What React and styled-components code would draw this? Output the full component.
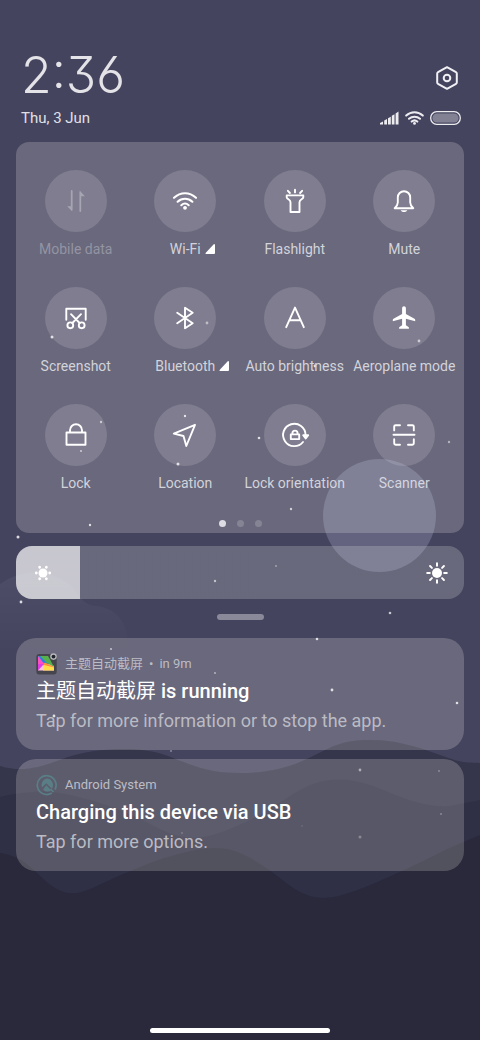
import { useState } from "react";
import styled, { createGlobalStyle } from "styled-components";

const GlobalStyle = createGlobalStyle`
  * {
    box-sizing: border-box;
  }

  body {
    margin: 0;
    background: #29293b;
    font-family: Roboto, "Noto Sans CJK SC", sans-serif;
  }

  button {
    padding: 0;
    border: 0;
    background: none;
    color: inherit;
    font-family: inherit;
    cursor: pointer;
  }

  h2,
  p {
    margin: 0;
  }
`;

const glass = "rgba(248, 250, 240, 0.2)";

const Page = styled.div`
  position: relative;
  isolation: isolate;
  display: flex;
  flex-direction: column;
  min-height: 100vh;
  padding: 44px 16px 7px;
  overflow: hidden;
  color: #fff;
`;

const Wallpaper = styled.svg`
  position: absolute;
  inset: 0;
  z-index: -1;
  width: 100%;
  height: 100%;
`;

const Header = styled.header`
  padding: 0 3px 0 5px;
  margin-bottom: 12px;
`;

const HeaderRow = styled.div`
  display: flex;
  align-items: flex-end;
  justify-content: space-between;
`;

const Clock = styled.time`
  font-family: Inter, Lato, sans-serif;
  font-size: 50px;
  font-weight: 300;
  line-height: 62px;
  font-feature-settings: "cv03", "cv09", "case";
  color: #e3e3e8;
`;

const SettingsButton = styled.button`
  display: flex;
  align-items: center;
  justify-content: center;
  width: 28px;
  height: 56px;
`;

const DateText = styled.span`
  font-size: 15px;
  line-height: 24px;
  color: #e0e0e6;
`;

const StatusIcons = styled.div`
  display: flex;
  align-items: center;
  gap: 6px;
  height: 24px;
`;

const Panel = styled.section`
  padding: 28px 5px 6px;
  border-radius: 13px;
  background: ${glass};
`;

const TileGrid = styled.div`
  display: grid;
  grid-template-columns: repeat(4, minmax(0, 1fr));
  row-gap: 28px;
`;

const Tile = styled.button`
  display: flex;
  flex-direction: column;
  align-items: center;
  gap: 7px;
  color: ${(props) => (props.disabled ? "#a6a5b2" : "#fff")};
`;

const TileIcon = styled.span`
  display: flex;
  align-items: center;
  justify-content: center;
  width: 62px;
  height: 62px;
  border-radius: 50%;
  background: rgba(255, 248, 255, 0.15);
`;

const TileLabel = styled.span`
  display: flex;
  align-items: center;
  gap: 4px;
  font-size: 14px;
  line-height: 20px;
  white-space: nowrap;
  color: ${(props) => (props.$dim ? "#9494a3" : "#d3d3da")};

  &::before {
    content: "";
    display: ${(props) => (props.$more ? "block" : "none")};
    width: 10px;
  }
`;

const Dots = styled.div`
  display: flex;
  justify-content: center;
  gap: 11px;
  margin-top: 27px;
`;

const Dot = styled.span`
  width: 7px;
  height: 7px;
  border-radius: 50%;
  background: ${(props) => (props.$active ? "#dcdce2" : "#858495")};
`;

const Brightness = styled.label`
  position: relative;
  display: block;
  margin-top: 13px;
`;

const Range = styled.input`
  display: block;
  appearance: none;
  width: 100%;
  height: 53px;
  margin: 0;
  border-radius: 16px;
  cursor: pointer;

  &::-webkit-slider-thumb {
    appearance: none;
    width: 1px;
    height: 53px;
  }
`;

const SunIcon = styled.svg`
  position: absolute;
  top: 15px;
  ${(props) => (props.$side === "left" ? "left: 15px;" : "right: 15px;")}
  pointer-events: none;
`;

const Handle = styled.div`
  align-self: center;
  width: 47px;
  height: 6px;
  margin: 15px 0 18px;
  border-radius: 3px;
  background: #8a899a;
`;

const Notifications = styled.div`
  display: flex;
  flex-direction: column;
  gap: 9px;
`;

const Card = styled.article`
  display: flex;
  flex-direction: column;
  gap: 2px;
  padding: 15px 20px;
  border-radius: 20px;
  background: ${glass};
`;

const CardHeader = styled.div`
  display: flex;
  align-items: center;
  gap: 8px;
  height: 22px;
  font-size: 13px;
  line-height: 20px;
  color: #bcbcc5;
`;

const CardMeta = styled.div`
  display: flex;
  align-items: center;
  gap: 6px;
`;

const CardTitle = styled.h2`
  font-size: 20px;
  font-weight: 500;
  line-height: 28px;
`;

const TitleApp = styled.span`
  font-weight: 400;
`;

const CardText = styled.p`
  font-size: 18px;
  line-height: 28px;
  color: #bbbbc4;
`;

const TouchPoint = styled.div`
  position: absolute;
  top: 459px;
  left: 323px;
  width: 113px;
  height: 113px;
  border-radius: 50%;
  background: rgba(220, 224, 255, 0.2);
  pointer-events: none;
`;

const HomeBar = styled.div`
  align-self: center;
  width: 40%;
  height: 5px;
  margin-top: auto;
  border-radius: 3px;
  background: #fff;
`;

const stars = [
  [52, 337, 1.5, 0.8],
  [207, 323, 1.4, 0.5],
  [419, 341, 1.4, 0.6],
  [315, 366, 1.4, 0.8],
  [101, 422, 1.2, 0.6],
  [81, 451, 1.1, 0.6],
  [185, 416, 1.2, 0.8],
  [178, 464, 1.5, 0.8],
  [259, 438, 1.3, 0.8],
  [449, 442, 1.2, 0.5],
  [291, 509, 1.2, 0.7],
  [90, 525, 1.2, 0.8],
  [18, 537, 1.5, 0.8],
  [21, 602, 1.4, 0.8],
  [215, 581, 1.2, 0.6],
  [276, 566, 1, 0.4],
  [390, 613, 1.3, 0.7],
  [317, 639, 1.3, 0.8],
  [111, 649, 1.1, 0.6],
  [332, 690, 1.4, 0.8],
  [215, 673, 1, 0.5],
  [54, 716, 1.4, 0.8],
  [457, 703, 1.3, 0.8],
  [171, 751, 0.9, 0.4],
  [360, 770, 1.4, 0.5],
  [439, 771, 1, 0.3],
  [441, 814, 1, 0.3],
  [360, 837, 1.5, 0.3],
  [302, 826, 1, 0.1],
  [182, 833, 1, 0.2],
];

const icons = {
  data: (
    <g strokeWidth="1.8">
      <path d="M7.7 2v18.5M16.3 22V3.5" />
      <path
        d="M8.4 22.5L3.2 17.2h4zM15.5 1.5l5.400 5.700h-4z"
        fill="currentColor"
        stroke="none"
      />
    </g>
  ),
  wifi: (
    <g strokeWidth="2.1">
      <path d="M1 8.8C7.5 2.8 16.5 2.8 23 8.8M4.6 12.7c4.3-4 10.5-4 14.8 0M8.3 16.2c2.2-2 5.2-2 7.4 0" />
      <circle cx="12" cy="18.8" r="1.9" fill="currentColor" stroke="none" />
    </g>
  ),
  flashlight: (
    <path d="M12 .8v2.6M4.9 1.8l2 2.2M19.1 1.8l-2 2.2M3.7 6.4h16.6v1.8c0 2-3.8 2.4-3.8 5V23h-9v-9.8c0-2.6-3.8-3-3.8-5z" />
  ),
  bell: (
    <>
      <path d="M2.7 19.2c1.9-1.8 3.1-3 3.1-5.6V8.4a6.2 6.2 0 0 1 12.4 0v5.2c0 2.6 1.2 3.8 3.1 5.6z" />
      <path d="M8.7 21.3h6.6c-.8 2.4-5.8 2.4-6.600 0z" fill="currentColor" stroke="none" />
    </>
  ),
  screenshot: (
    <>
      <path d="M2.3 13.7V2.8h19.4v10.9M17 8.2L8.4 17M7 8.2l8.6 8.8" />
      <circle cx="6.3" cy="19.3" r="2.9" />
      <circle cx="17.7" cy="19.3" r="2.9" />
    </>
  ),
  bluetooth: <path d="M4.2 17.2L19.7 6.8 12 1.7v20.6l7.7-5.1L4.2 6.8" />,
  auto: <path d="M3.2 21.2L12 1.6l8.8 19.6M6.4 14.3h11.2" />,
  plane: (
    <path
      d="M12 .3c1.1 0 1.9.8 1.9 2v5.8l8.6 4.7c.5.3.7.7.7 1.2v1.2l-9.3-2.5v6.5l2.6 1.900c.3.2.4.5.4.8v.9H7.1v-.9c0-.3.1-.6.4-.8l2.600-1.900v-6.500L.8 15.200V14c0-.5.2-.9.7-1.200l8.600-4.700V2.300c0-1.200.8-2 1.900-2z"
      fill="currentColor"
      stroke="none"
    />
  ),
  lock: <path d="M2.5 9.5h19v12.3h-19zM6 9.3V7.2a6 6 0 0 1 12 0v2.1" />,
  location: <path d="M22 1.8L.8 10.6l9.7 2.4 2.8 10z" />,
  orientation: (
    <>
      <path d="M22.5 12A11.2 11.2 0 1 0 20 19" />
      <path d="M20.200 12.200h5L22.700 15.500z" fill="currentColor" />
      <path d="M7.8 11.4h8.4v4.7H7.8zM9.4 11.2v-1a2.6 2.6 0 0 1 5.2 0v1" />
    </>
  ),
  scanner: (
    <path d="M2.2 7.4V3.6c0-.9.5-1.4 1.4-1.4H8M16 2.2h4.4c.9 0 1.4.5 1.4 1.4v3.8M21.8 16.3v4c0 .9-.5 1.4-1.4 1.4H16M8 21.7H3.6c-.9 0-1.4-.5-1.4-1.4v-4M1.5 11.8h21" />
  ),
};

const tiles = [
  { icon: "data", label: "Mobile data", disabled: true },
  { icon: "wifi", label: "Wi-Fi", more: true },
  { icon: "flashlight", label: "Flashlight" },
  { icon: "bell", label: "Mute" },
  { icon: "screenshot", label: "Screenshot" },
  { icon: "bluetooth", label: "Bluetooth", more: true },
  { icon: "auto", label: "Auto brightness" },
  { icon: "plane", label: "Aeroplane mode" },
  { icon: "lock", label: "Lock" },
  { icon: "location", label: "Location" },
  { icon: "orientation", label: "Lock orientation" },
  { icon: "scanner", label: "Scanner" },
];

function Icon({ name }) {
  return (
    <svg
      width="24"
      height="24"
      viewBox="0 0 24 24"
      fill="none"
      stroke="currentColor"
      strokeWidth="1.9"
      strokeLinecap="round"
      strokeLinejoin="round"
      overflow="visible"
      aria-hidden="true"
    >
      {icons[name]}
    </svg>
  );
}

function Background() {
  return (
    <Wallpaper viewBox="0 0 480 1040" preserveAspectRatio="xMidYMax slice" aria-hidden="true">
      <defs>
        <linearGradient id="hill" x1="0" y1="0" x2="0" y2="1">
          <stop offset="0" stopColor="#fff" stopOpacity="0.05" />
          <stop offset="0.6" stopColor="#fff" stopOpacity="0" />
        </linearGradient>
      </defs>
      <rect width="480" height="1040" fill="#45445f" />
      <path
        d="M0 584C20 570 45 568 66 582C78 590 80 605 96 606C116 608 128 622 128 646V706H0z"
        fill="url(#hill)"
      />
      <path
        d="M0 766C30 775 50 762 75 755S140 746 165 755S205 773 240 773S295 765 315 755S345 740 370 740S415 746 440 755S465 762 480 763V1040H0z"
        fill="#35354b"
      />
      <path
        d="M0 797C20 792 45 789 70 795S120 808 150 824S195 842 225 831S280 802 300 790S345 776 370 785S420 808 450 806L480 800V1040H0z"
        fill="#2f2f45"
      />
      <path
        d="M0 853C28 857 38 877 52 886S75 896 95 887S145 863 175 855S225 843 252 859S285 884 300 892S330 900 355 891S420 863 445 850L480 835V1040H0z"
        fill="#29293b"
      />
      {stars.map(([x, y, r, opacity]) => (
        <circle key={`${x}-${y}`} cx={x} cy={y} r={r} fill="#fff" opacity={opacity} />
      ))}
    </Wallpaper>
  );
}

function StatusBar() {
  return (
    <StatusIcons>
      <svg width="19" height="14" viewBox="0 0 19 14" fill="#ececf0" aria-label="Signal">
        <path d="M0 13.5V12l3-1.5v3zM4.2 9.5L7 8v5.5H4.2zM8 7.300l2.800-1.500v7.700H8zM11.800 4.800l2.700-1.500v10.200h-2.700zM15.600 2.400L18.500.6v12.900h-2.900z" />
      </svg>
      <svg width="19" height="14" viewBox="0 0 19 14" fill="none" aria-label="Wi-Fi">
        <g stroke="#ececf0" strokeWidth="2" strokeLinecap="round">
          <path d="M1.2 4.6c4.8-4.4 11.8-4.4 16.6 0M4 7.8c3.2-2.9 7.8-2.9 11 0M6.7 10.6c1.7-1.5 3.9-1.5 5.6 0" />
        </g>
        <circle cx="9.5" cy="12.400" r="1.4" fill="#ececf0" />
      </svg>
      <svg width="31" height="14" viewBox="0 0 31 14" fill="none" aria-label="Battery">
        <rect x=".7" y=".7" width="29.6" height="12.6" rx="6" stroke="#ececf0" strokeWidth="1.3" />
        <rect x="2.5" y="2.5" width="26" height="9" rx="4.3" fill="#828193" />
      </svg>
    </StatusIcons>
  );
}

function GalleryIcon() {
  return (
    <svg width="21" height="22" viewBox="0 0 21 22" aria-hidden="true">
      <rect x=".3" y="1" width="20.4" height="20.5" rx="3" fill="#46454d" />
      <path d="M2 3l16 10v4.5H2z" fill="#ffc2dc" />
      <path d="M2 3v9l7-1z" fill="#ff4fc4" />
      <path d="M2 3h3l9 8-5 1z" fill="#2b7de0" />
      <path d="M4 3h8l2 3.500 4 7.500-7-4z" fill="#56b04c" />
      <path d="M9 9.500l9 4.500v1L6 12z" fill="#ff9138" />
      <path d="M8 12l10 2.500v3H7z" fill="#ffe04a" />
      <path d="M2 11l6 0-6 6.500z" fill="#e23be8" />
      <circle cx="17.5" cy="3.6" r="3.3" fill="#b4b6bb" />
      <circle cx="17.5" cy="3.6" r="1.9" fill="#22242c" />
    </svg>
  );
}

function SystemIcon() {
  return (
    <svg width="21" height="22" viewBox="0 0 21 22" fill="none" aria-hidden="true">
      <path d="M15.8 19A9.4 9.4 0 1 1 19 15.5" stroke="#5a7e86" strokeWidth="1.7" />
      <path
        d="M10.5 4.6a6.5 6.5 0 0 1 5.4 10.1l-5.6-5.5-4.3 4.2A6.5 6.5 0 0 1 10.5 4.6z"
        fill="#5a7e86"
      />
      <path d="M10.3 11.3l5 5c-2.6 1.9-6 1.7-8.2-.9z" fill="#5a7e86" />
      <path d="M14.5 15l3 3" stroke="#5a7e86" strokeWidth="1.7" />
    </svg>
  );
}

function BrightnessSlider() {
  const [value, setValue] = useState(14.3);

  return (
    <Brightness>
      <Range
        type="range"
        aria-label="Brightness"
        min="0"
        max="100"
        step="0.1"
        value={value}
        onChange={(e) => setValue(Number(e.target.value))}
        style={{
          background: `linear-gradient(to right, rgba(255, 255, 255, 0.7) ${value}%, ${glass} ${value}%)`,
        }}
      />
      <SunIcon $side="left" width="24" height="24" viewBox="0 0 24 24" fill="#fff" aria-hidden="true">
        <circle cx="12" cy="12" r="4.5" />
        {[0, 60, 120, 180, 240, 300].map((deg) => (
          <circle key={deg} cx="18.7" cy="12" r="1.4" transform={`rotate(${deg} 12 12)`} />
        ))}
      </SunIcon>
      <SunIcon $side="right" width="24" height="24" viewBox="0 0 24 24" fill="#fff" aria-hidden="true">
        <circle cx="12" cy="12" r="5" />
        {[0, 45, 90, 135, 180, 225, 270, 315].map((deg) => (
          <path
            key={deg}
            d="M19.2 12h2.6"
            stroke="#fff"
            strokeWidth="2"
            strokeLinecap="round"
            transform={`rotate(${deg} 12 12)`}
          />
        ))}
      </SunIcon>
    </Brightness>
  );
}

function App() {
  return (
    <>
      <GlobalStyle />
      <Page>
        <Background />
        <Header>
          <HeaderRow>
            <Clock>2:36</Clock>
            <SettingsButton aria-label="Settings">
              <svg width="24" height="26" viewBox="0 0 24 26" fill="none" stroke="#f0f0f4" strokeWidth="2" aria-hidden="true">
                <path
                  d="M12 2.2l9 5c.6.3.8.7.8 1.3v9c0 .6-.2 1-.8 1.3l-9 5-9-5c-.6-.3-.8-.7-.8-1.3v-9c0-.6.2-1 .8-1.3z"
                  strokeLinejoin="round"
                />
                <circle cx="12" cy="13" r="3.3" />
              </svg>
            </SettingsButton>
          </HeaderRow>
          <HeaderRow>
            <DateText>Thu, 3 Jun</DateText>
            <StatusBar />
          </HeaderRow>
        </Header>

        <Panel>
          <TileGrid>
            {tiles.map(({ icon, label, disabled, more }) => (
              <Tile key={label} disabled={disabled}>
                <TileIcon>
                  <Icon name={icon} />
                </TileIcon>
                <TileLabel $dim={disabled} $more={more}>
                  {label}
                  {more && (
                    <svg width="10" height="10" viewBox="0 0 10 10" aria-hidden="true">
                      <path d="M9 0q1 0 1 1v8q0 1-1 1H1Q0 10 .6 9z" fill="#fff" />
                    </svg>
                  )}
                </TileLabel>
              </Tile>
            ))}
          </TileGrid>
          <Dots>
            <Dot $active />
            <Dot />
            <Dot />
          </Dots>
        </Panel>

        <BrightnessSlider />
        <Handle />

        <Notifications>
          <Card>
            <CardHeader>
              <GalleryIcon />
              <CardMeta>
                <span>主题自动截屏</span>
                <span>•</span>
                <span>in 9m</span>
              </CardMeta>
            </CardHeader>
            <CardTitle>
              <TitleApp>主题自动截屏</TitleApp> is running
            </CardTitle>
            <CardText>Tap for more information or to stop the app.</CardText>
          </Card>
          <Card>
            <CardHeader>
              <SystemIcon />
              <CardMeta>Android System</CardMeta>
            </CardHeader>
            <CardTitle>Charging this device via USB</CardTitle>
            <CardText>Tap for more options.</CardText>
          </Card>
        </Notifications>

        <TouchPoint />
        <HomeBar />
      </Page>
    </>
  );
}

export default App;
